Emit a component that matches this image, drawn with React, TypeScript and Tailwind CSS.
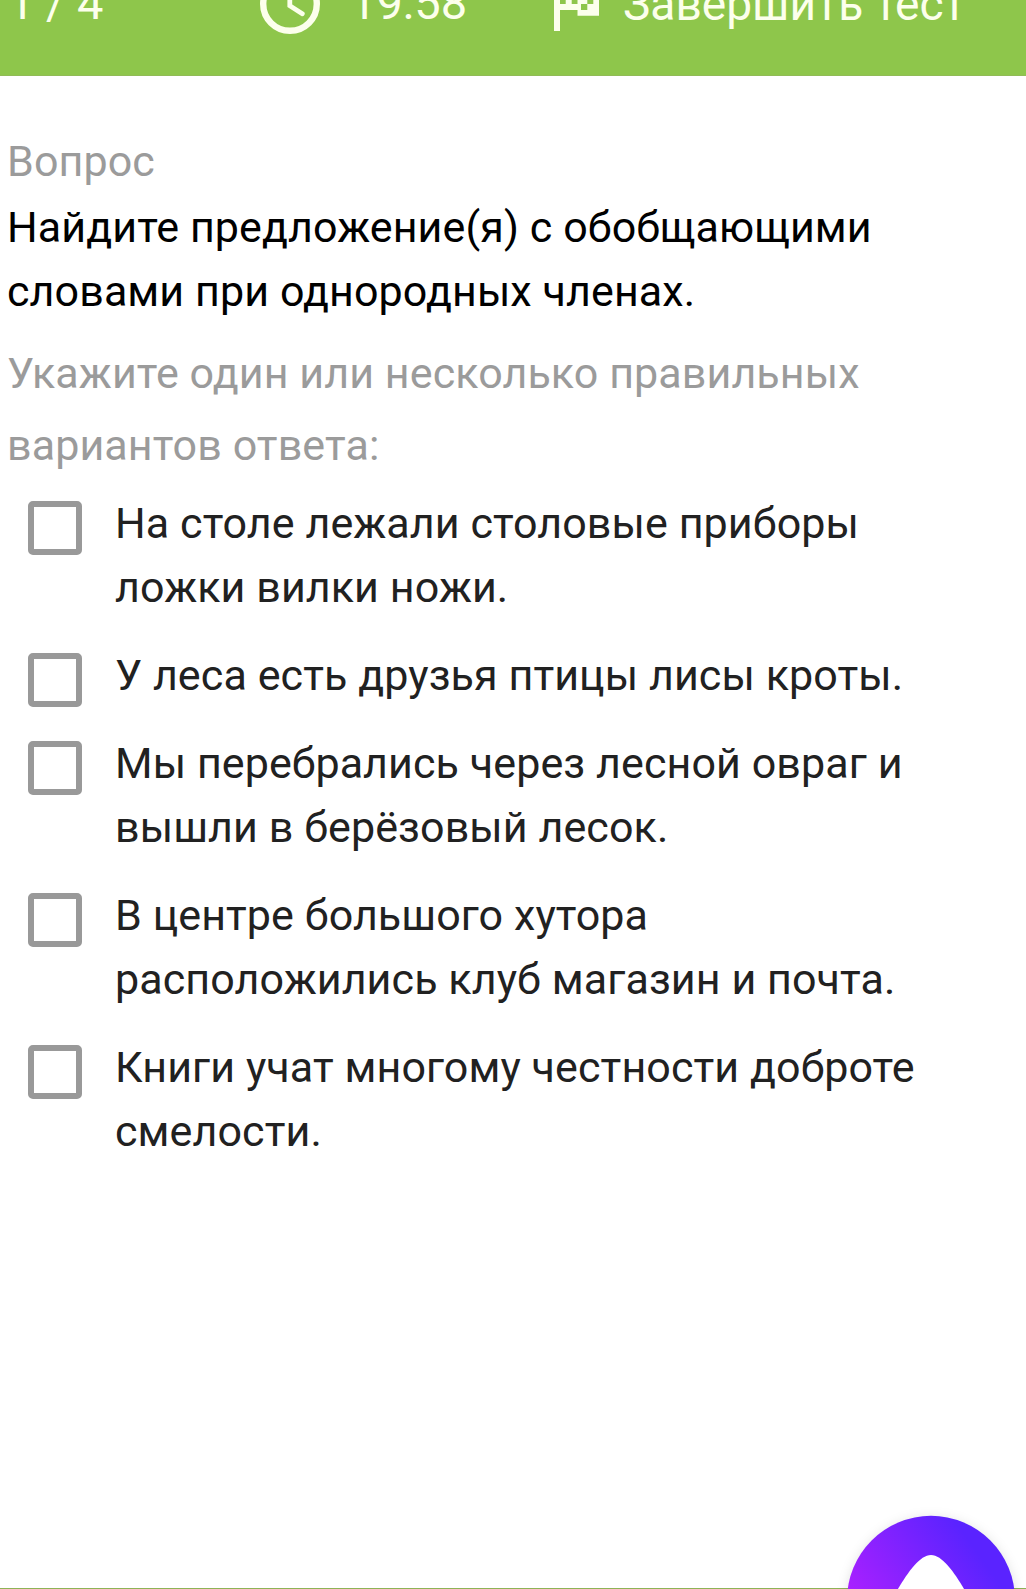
import clsx from 'clsx'

interface Answer {
  id: number
  lines: string[]
}

const answers: Answer[] = [
  { id: 1, lines: ['На столе лежали столовые приборы', 'ложки вилки ножи.'] },
  { id: 2, lines: ['У леса есть друзья птицы лисы кроты.'] },
  { id: 3, lines: ['Мы перебрались через лесной овраг и', 'вышли в берёзовый лесок.'] },
  { id: 4, lines: ['В центре большого хутора', 'расположились клуб магазин и почта.'] },
  { id: 5, lines: ['Книги учат многому честности доброте', 'смелости.'] },
]

function Lines({ lines, className }: { lines: string[]; className?: string }) {
  return (
    <div className={clsx('whitespace-nowrap', className)}>
      {lines.map(line => (
        <p key={line}>{line}</p>
      ))}
    </div>
  )
}

function ClockIcon() {
  return (
    <svg className="shrink-0" width="60" height="34" viewBox="0 0 60 34" fill="none" stroke="#fcffec">
      <circle cx="30" cy="4" r="26.8" strokeWidth="6.4" />
      <path d="M29.8 -12V5.7l12.5 8" strokeWidth="4.8" strokeLinecap="round" />
    </svg>
  )
}

function FlagIcon() {
  return (
    <svg className="shrink-0" width="46" height="31" viewBox="0 0 46 31">
      <path fill="#fcffec" d="M0 0h45v15.7H23.5V10H6v21H0z" />
      <path fill="#8ec64b" d="M6 0h5.7v4H6zM17.7 0h5.8v4h-5.8zM33.3 0h6v4h-6zM27 4h6.3v6H27z" />
    </svg>
  )
}

function Header() {
  return (
    <header className="h-[76px] bg-[#8ec64b] border-b border-[#91bb57] flex items-start overflow-hidden text-[#fcffec] text-[47px] tracking-normal leading-[64px] whitespace-nowrap">
      <span className="w-[260px] pl-[8px] -mt-[29px] shrink-0">1 / 4</span>
      <ClockIcon />
      <span className="w-[234px] pl-[30px] -mt-[29px] shrink-0">19:58</span>
      <FlagIcon />
      <span className="pl-[23px] -mt-[28px] text-[46.1px]">Завершить тест</span>
    </header>
  )
}

function AliceButton() {
  return (
    <div className="absolute left-[848px] bottom-0 w-[166px] h-[73px]">
      <svg className="overflow-visible" width="166" height="73" viewBox="0 0 166 73">
        <defs>
          <linearGradient id="alice" gradientUnits="userSpaceOnUse" x1="12" y1="110" x2="125" y2="30">
            <stop offset="0" stopColor="#b020ff" />
            <stop offset="1" stopColor="#5a23ff" />
          </linearGradient>
        </defs>
        <circle className="drop-shadow-[0_2px_6px_rgba(0,0,0,0.12)]" cx="83" cy="83.8" r="84" fill="url(#alice)" />
        <path d="M47 78C58 59 71 39 83 39s25 20 36 39z" fill="#fff" />
      </svg>
    </div>
  )
}

export default function App() {
  return (
    <div className="relative w-[1026px] h-[1589px] overflow-hidden bg-white font-[Roboto,sans-serif] text-[43px] tracking-[0.1px] leading-[64px] flex flex-col">
      <Header />
      <main className="flex-1 pt-[53px]">
        <section className="pl-[7px]">
          <h2 className="text-[#9b9b9b]">Вопрос</h2>
          <Lines className="mt-[2px] text-black" lines={['Найдите предложение(я) с обобщающими', 'словами при однородных членах.']} />
          <Lines className="mt-[14px] leading-[72px] text-[#9b9b9b]" lines={['Укажите один или несколько правильных', 'вариантов ответа:']} />
        </section>
        <ul className="mt-[10px] flex flex-col gap-6">
          {answers.map(answer => (
            <li key={answer.id}>
              <label className="flex items-start pl-7">
                <input type="checkbox" className="appearance-none mt-[10px] mr-[33px] size-[54px] shrink-0 rounded-[5px] border-6 border-[#999999]" />
                <Lines className="text-[#212121]" lines={answer.lines} />
              </label>
            </li>
          ))}
        </ul>
      </main>
      <footer className="h-px bg-[#8db356]" />
      <AliceButton />
    </div>
  )
}
